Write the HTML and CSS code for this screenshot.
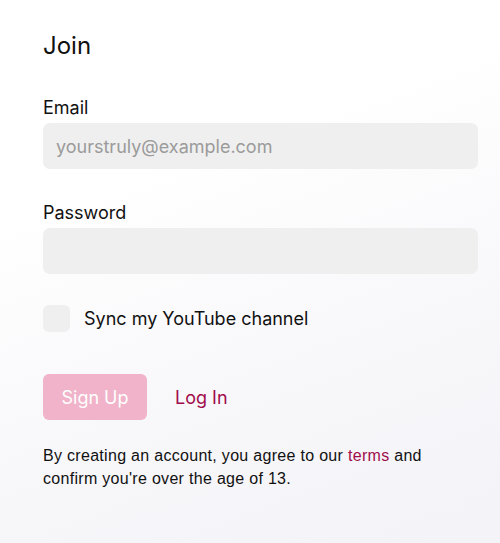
FILE: index.html
```html
<!DOCTYPE html>
<html lang="en">
<head>
    <meta charset="UTF-8">
    <meta name="viewport" content="width=device-width, initial-scale=1.0">
    <title>Join</title>
    <link rel="stylesheet" href="styles.css">
</head>
<body>
    <div class="container">
        <h1>Join</h1>
        <form class="join-form">
            <div class="field">
                <label for="email">Email</label>
                <input type="email" id="email" placeholder="yourstruly@example.com">
            </div>
            <div class="field">
                <label for="password">Password</label>
                <input type="password" id="password">
            </div>
            <label class="check">
                <span class="box"></span>
                Sync my YouTube channel
            </label>
            <div class="actions">
                <button type="button" class="btn">Sign Up</button>
                <a href="#" class="link">Log In</a>
            </div>
            <p class="note">By creating an account, you agree to our <a href="#">terms</a> and confirm you're over the age of 13.</p>
        </form>
    </div>
</body>
</html>
```

FILE: styles.css
```css
* {
    margin: 0;
    padding: 0;
    box-sizing: border-box;
    font-family: 'Inter', 'Liberation Sans', sans-serif;
}

html, body {
    height: 100%;
}

body {
    background: linear-gradient(160deg, #ffffff 30%, #f7f6f9 70%, #f3f3f8 100%);
    color: #111;
    padding: 31px 22px 0 43px;
}

.container {
    max-width: 435px;
}

h1 {
    font-size: 24px;
    font-weight: 400;
    line-height: 29px;
    margin-bottom: 37px;
}

.field {
    display: flex;
    flex-direction: column;
    gap: 4px;
    margin-bottom: 33px;
}

.field label {
    font-size: 18px;
    line-height: 22px;
}

.field input {
    height: 46px;
    border: none;
    border-radius: 7px;
    background: #efefef;
    padding: 0 13px;
    font-size: 18px;
    color: #333;
    outline: none;
}

.field input::placeholder {
    color: #9b9b9b;
}

.check {
    display: flex;
    align-items: center;
    gap: 14px;
    font-size: 18px;
    line-height: 22px;
    margin-top: -2px;
}

.box {
    width: 27px;
    height: 27px;
    border-radius: 6px;
    background: #efefef;
}

.actions {
    display: flex;
    align-items: center;
    gap: 28px;
    margin-top: 42px;
}

.btn {
    width: 104px;
    height: 46px;
    border: none;
    border-radius: 6px;
    background: #f0b3c9;
    color: #fff;
    font-size: 18px;
}

.link {
    color: #a10d4b;
    font-size: 18px;
    text-decoration: none;
}

.note {
    max-width: 400px;
    margin-top: 24px;
    font-family: 'Liberation Sans', Arial, sans-serif;
    font-size: 16px;
    letter-spacing: 0.3px;
    line-height: 23px;
    color: #111;
}

.note a {
    font-family: inherit;
    color: #a10d4b;
    text-decoration: none;
}
```
